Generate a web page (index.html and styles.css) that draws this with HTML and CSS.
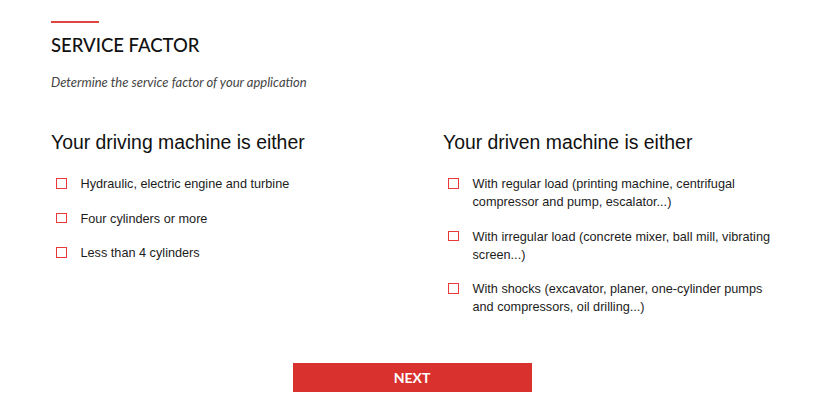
FILE: index.html
```html
<!DOCTYPE html>
<html lang="en">
<head>
    <meta charset="UTF-8">
    <meta name="viewport" content="width=device-width, initial-scale=1.0">
    <title>Service factor</title>
    <link rel="stylesheet" href="styles.css">
</head>
<body>
    <div class="wizard">
        <div class="title-rule"></div>
        <h1>SERVICE FACTOR</h1>
        <p class="lead">Determine the service factor of your application</p>

        <div class="columns">
            <!-- Driving side -->
            <div class="column">
                <h2>Your driving machine is either</h2>
                <label class="option"><span class="box"></span><span>Hydraulic, electric engine and turbine</span></label>
                <label class="option"><span class="box"></span><span>Four cylinders or more</span></label>
                <label class="option"><span class="box"></span><span>Less than 4 cylinders</span></label>
            </div>

            <!-- Driven side -->
            <div class="column">
                <h2>Your driven machine is either</h2>
                <label class="option"><span class="box"></span><span>With regular load (printing machine, centrifugal compressor and pump, escalator...)</span></label>
                <label class="option"><span class="box"></span><span>With irregular load (concrete mixer, ball mill, vibrating screen...)</span></label>
                <label class="option"><span class="box"></span><span>With shocks (excavator, planer, one-cylinder pumps and compressors, oil drilling...)</span></label>
            </div>
        </div>

        <div class="actions">
            <button class="next">NEXT</button>
        </div>
    </div>
</body>
</html>
```

FILE: styles.css
```css
body {
    margin: 0;
    background: #fff;
    color: #1a1a1a;
    font-family: "Liberation Sans", Arial, sans-serif;
}
.wizard {
    padding: 21px 51px 0 51px;
}
.title-rule {
    width: 48px;
    height: 2px;
    background: #e0443f;
}
h1 {
    margin: 10px 0 0 0;
    font-family: Lato, "Open Sans", sans-serif;
    font-size: 18.5px;
    font-weight: 500;
    line-height: 24px;
    color: #111;
}
.lead {
    margin: 17px 0 0 0;
    font-family: Lato, "Open Sans", sans-serif;
    font-style: italic;
    font-size: 13px;
    color: #444;
}
.columns {
    display: grid;
    grid-template-columns: 392px 1fr;
    margin-top: 40px;
}
h2 {
    margin: 0 0 21px 0;
    font-size: 19.4px;
    font-weight: normal;
    line-height: 24px;
    color: #111;
}
.option {
    display: flex;
    align-items: flex-start;
    gap: 14px;
    margin-bottom: 16.5px;
    padding-left: 5px;
    font-size: 12.7px;
    line-height: 18px;
    color: #1c1c1c;
    max-width: 330px;
}
.box {
    flex: none;
    width: 8.5px;
    height: 8.5px;
    margin-top: 3px;
    border: 1.5px solid #e5393a;
}
.actions {
    display: flex;
    justify-content: center;
    margin-top: 30px;
    padding-right: 12px;
}
.next {
    width: 239px;
    height: 29px;
    border: none;
    background: #d9312d;
    color: #fff;
    font-family: Lato, "Open Sans", sans-serif;
    font-weight: bold;
    font-size: 14px;
    cursor: pointer;
}
```
